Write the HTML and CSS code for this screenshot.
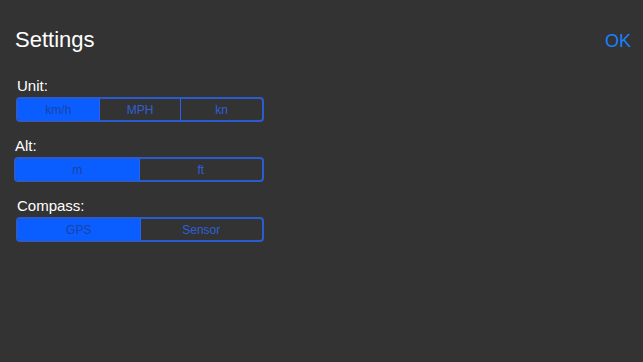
FILE: index.html
```html
<!DOCTYPE html>
<html lang="en">
<head>
<meta charset="utf-8">
<title>Settings</title>
<link rel="stylesheet" href="styles.css">
</head>
<body>
<div class="screen">
  <header class="header">
    <h1 class="title">Settings</h1>
    <button class="ok">OK</button>
  </header>
  <section class="group">
    <div class="label">Unit:</div>
    <div class="segmented">
      <div class="seg selected">km/h</div>
      <div class="seg">MPH</div>
      <div class="seg">kn</div>
    </div>
  </section>
  <section class="group group-wide">
    <div class="label">Alt:</div>
    <div class="segmented">
      <div class="seg selected">m</div>
      <div class="seg">ft</div>
    </div>
  </section>
  <section class="group">
    <div class="label">Compass:</div>
    <div class="segmented">
      <div class="seg selected">GPS</div>
      <div class="seg">Sensor</div>
    </div>
  </section>
</div>
</body>
</html>
```

FILE: styles.css
```css
html, body {
  margin: 0;
  padding: 0;
  background: #333333;
}
body {
  width: 643px;
  height: 362px;
  overflow: hidden;
  font-family: "Liberation Sans", Arial, sans-serif;
  color: #ffffff;
}
.screen {
  display: flex;
  flex-direction: column;
  padding: 27px 12px 0 16px;
}
.header {
  display: flex;
  justify-content: space-between;
  align-items: baseline;
  margin-left: -1px;
  margin-bottom: 24px;
}
.title {
  margin: 0;
  font-size: 22px;
  line-height: 26px;
  font-weight: normal;
  color: #ffffff;
}
.ok {
  background: none;
  border: none;
  padding: 0;
  font-family: inherit;
  font-size: 18px;
  line-height: 22px;
  color: #1a80ff;
}
.group {
  display: flex;
  flex-direction: column;
  width: 248px;
  margin-bottom: 15px;
}
.group-wide {
  width: 250px;
  margin-left: -2px;
}
.label {
  font-size: 15px;
  line-height: 18px;
  margin-bottom: 2px;
  padding-left: 1px;
  color: #ffffff;
}
.segmented {
  display: flex;
  height: 25px;
  box-sizing: border-box;
  border: 2px solid #2a5ccf;
  border-radius: 4px;
  overflow: hidden;
}
.seg {
  flex: 1;
  display: flex;
  align-items: center;
  justify-content: center;
  font-size: 12px;
  color: #2e60d8;
  border-left: 1px solid #2d62ee;
}
.seg:first-child {
  border-left: none;
}
.seg.selected {
  background: #0a5eff;
  color: #1c42a4;
}
```
